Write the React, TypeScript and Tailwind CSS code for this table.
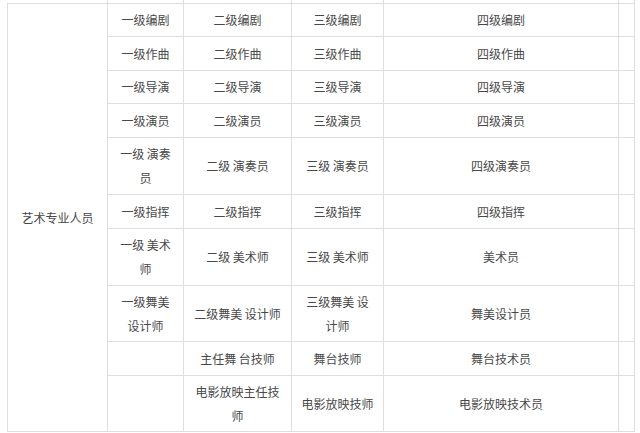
const rows: { h: string; cells: string[] }[] = [
  { h: "h-[33px]", cells: ["一级编剧", "二级编剧", "三级编剧", "四级编剧"] },
  { h: "h-[34px]", cells: ["一级作曲", "二级作曲", "三级作曲", "四级作曲"] },
  { h: "h-[33px]", cells: ["一级导演", "二级导演", "三级导演", "四级导演"] },
  { h: "h-[34px]", cells: ["一级演员", "二级演员", "三级演员", "四级演员"] },
  { h: "h-[57px]", cells: ["一级 演奏员", "二级 演奏员", "三级 演奏员", "四级演奏员"] },
  { h: "h-[34px]", cells: ["一级指挥", "二级指挥", "三级指挥", "四级指挥"] },
  { h: "h-[57px]", cells: ["一级 美术师", "二级 美术师", "三级 美术师", "美术员"] },
  { h: "h-[56px]", cells: ["一级舞美 设计师", "二级舞美 设计师", "三级舞美 设计师", "舞美设计员"] },
  { h: "h-[34px]", cells: ["", "主任舞 台技师", "舞台技师", "舞台技术员"] },
  { h: "h-[56px]", cells: ["", "电影放映主任技师", "电影放映技师", "电影放映技术员"] },
];

const cell =
  "border border-[#dedede] px-[9px] text-center align-middle leading-[24px] break-all";

export default function App() {
  return (
    <div
      className="w-[640px] h-[433px] overflow-hidden bg-white text-[12px] text-[#484848]"
      style={{ fontFamily: '"Noto Sans CJK SC", "Noto Sans", sans-serif' }}
    >
      <table className="ml-[7px] -mt-px w-[627px] table-fixed border-collapse">
        <colgroup>
          <col className="w-[100px]" />
          <col className="w-[76px]" />
          <col className="w-[108px]" />
          <col className="w-[92px]" />
          <col className="w-[235px]" />
          <col className="w-[16px]" />
        </colgroup>
        <tbody>
          <tr className="h-[4px]">
            <td className="border border-[#dedede] border-l-0 p-0"></td>
            <td className="border border-[#dedede] p-0"></td>
            <td className="border border-[#dedede] p-0"></td>
            <td className="border border-[#dedede] p-0"></td>
            <td className="border border-[#dedede] p-0"></td>
            <td className="border border-[#dedede] p-0"></td>
          </tr>
          {rows.map((r, i) => (
            <tr key={i} className={r.h}>
              {i === 0 && (
                <td rowSpan={rows.length} className={cell}>
                  艺术专业人员
                </td>
              )}
              {r.cells.map((c, j) => (
                <td key={j} className={cell}>
                  {c}
                </td>
              ))}
              <td className="border border-[#dedede] p-0"></td>
            </tr>
          ))}
        </tbody>
      </table>
    </div>
  );
}
